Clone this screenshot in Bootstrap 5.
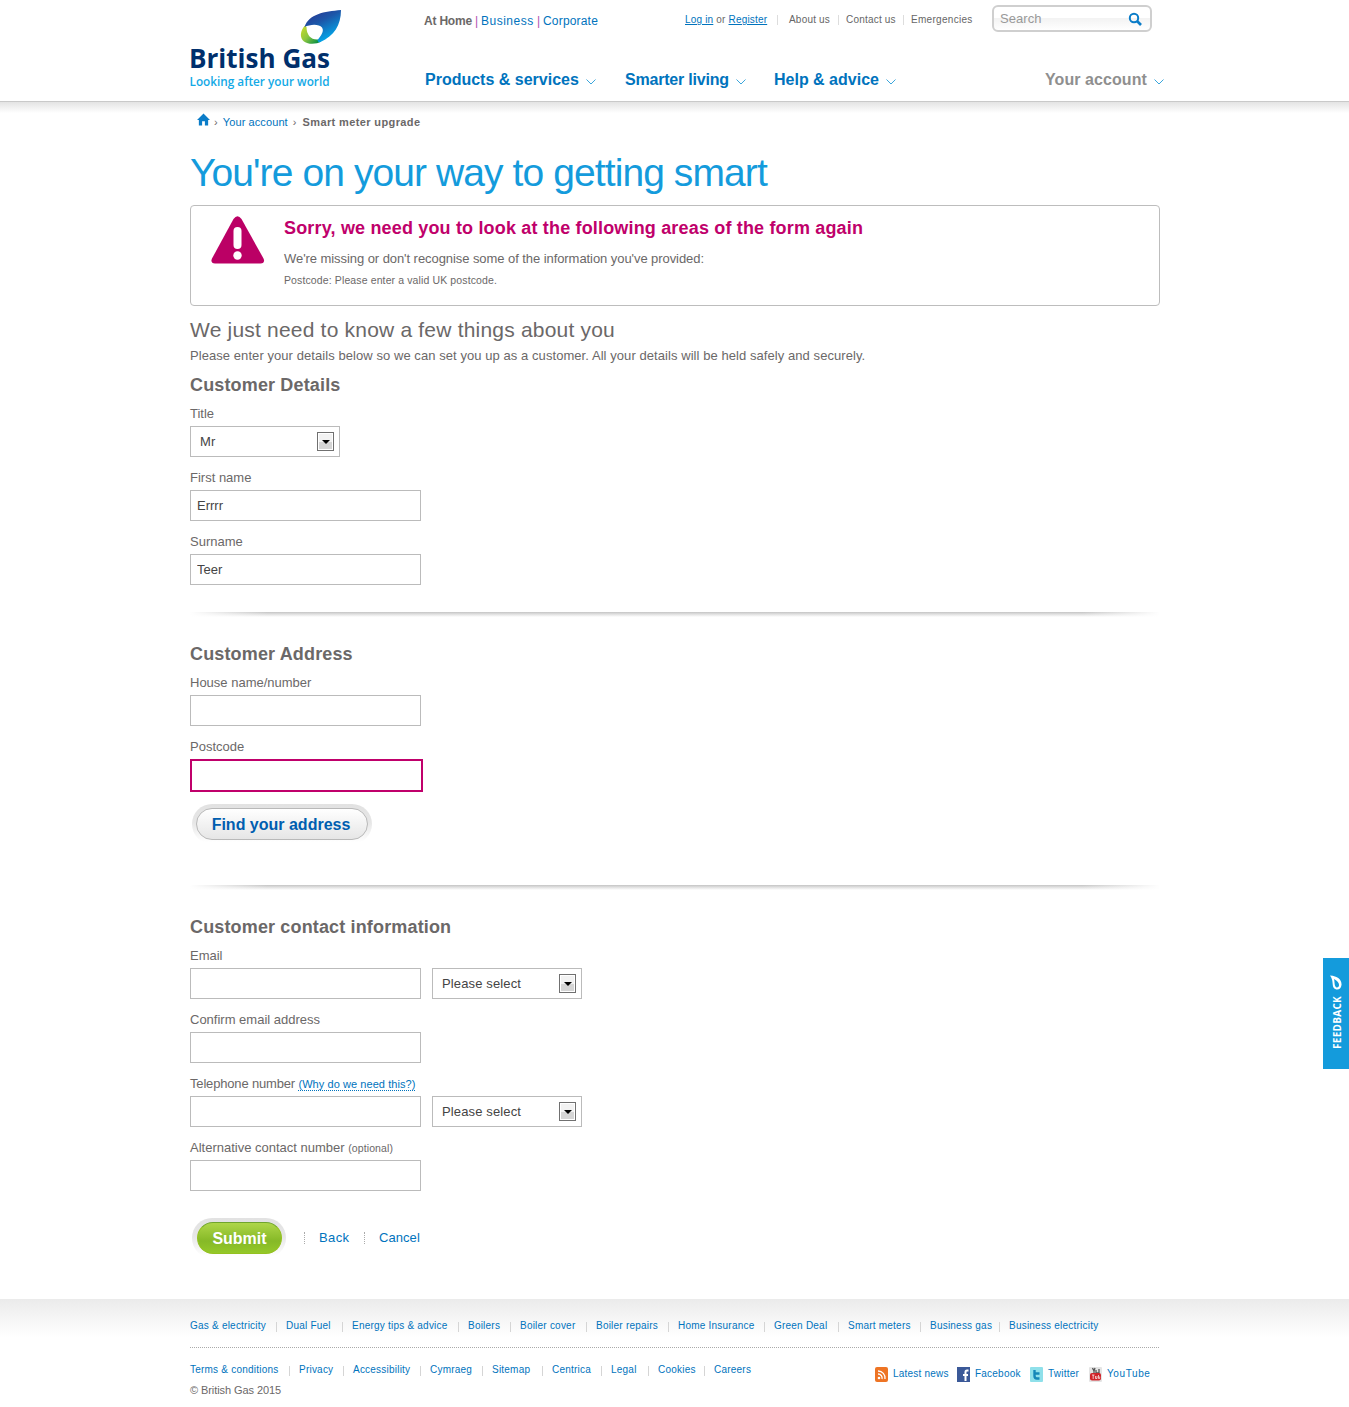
<!DOCTYPE html>
<html lang="en">
<head>
<meta charset="utf-8">
<meta name="viewport" content="width=device-width, initial-scale=1">
<title>Smart meter upgrade - British Gas</title>
<link href="https://cdn.jsdelivr.net/npm/bootstrap@5.3.0/dist/css/bootstrap.min.css" rel="stylesheet">
<style>
body{font-family:"Liberation Sans",Arial,sans-serif;font-size:13px;line-height:20px;color:#6b6868;letter-spacing:.06px;overflow-x:hidden}
a{color:#0073bd;text-decoration:none}
.wrap{width:970px;margin-left:190px}
.site-header{height:101px}
.logo{width:234px;height:101px;margin-left:-3px;margin-right:3px}
.header-main{width:740px}
.top-row{height:38px;padding-top:5px}
.audience{font-size:12px;width:261px;line-height:32px}
.audience a,.audience b{display:inline-block}
.audience b{letter-spacing:-.2px;width:48px}
.audience .biz{letter-spacing:.5px;width:53px}
.audience .corp{letter-spacing:.18px}
.audience i{font-style:normal;color:#b04fb0;display:inline-block;width:9px;text-align:center;letter-spacing:0}
.util{font-size:10px;letter-spacing:.2px;height:30px;width:307px}
.util u{color:#0073bd}
.util a{color:#666}
.util .in{letter-spacing:.18px;width:92px}
.util i{width:1px;height:10px;background:#ddd}
.u1{width:49px}.u2{width:57px}.u3{letter-spacing:.3px}
.search{width:160px;height:27px;border:2px solid #cfcfcf;border-radius:6px;color:#999;padding:0 8px 0 6px;background:linear-gradient(#fff 50%,#f3f3f3 50%,#fff)}
.main-nav{font-size:16px;font-weight:700;letter-spacing:0;padding:30px 0 0 1px;line-height:24px}
.main-nav a{display:flex;align-items:center}
.main-nav svg{margin:4px 0 0 7px}
.n1{width:200px}.n2{width:149px;letter-spacing:-.2px}.n3{width:271px}.n4{color:#8f8f8f!important;letter-spacing:.07px}
.head-shadow{height:12px;border-top:1px solid #c9c9c9;background:linear-gradient(#e3e3e3,#fff)}
.crumbs{font-size:11px;height:18px;letter-spacing:.1px;padding-left:7px;line-height:18px}
.crumbs a{margin:0 5px}
.crumbs b{letter-spacing:.38px;margin-left:6px}
h1{font-size:39px;line-height:48px;letter-spacing:-.91px;color:#149bdc;font-weight:400;margin:18px 0 8px}
.notice{height:101px;border:1px solid #bdbdbd;border-radius:4px;padding:10px 20px}
.notice svg{margin-right:19px}
.notice h2{font-size:18px;line-height:24px;font-weight:700;color:#c0006b;letter-spacing:.17px;margin:0 0 9px}
.notice p{letter-spacing:-.067px;margin:0;line-height:20px}
.notice p.detail{font-size:10.5px;letter-spacing:.12px;line-height:22px}
.intro{font-size:21px;line-height:28px;letter-spacing:.2px;font-weight:400;margin:10px 0 2px}
.lede{margin:0 0 7px;letter-spacing:.066px}
h3{font-size:18px;line-height:24px;font-weight:700;letter-spacing:.15px;margin:0 0 6px}
.field{height:64px}
.field label{display:block;height:20px;line-height:22px;margin-bottom:3px;letter-spacing:0}
.form-control{border:1px solid #bbb;border-radius:0;font-size:13px;height:31px;width:231px;padding:0 6px;color:#444;letter-spacing:0;line-height:29px;background:#fff}
.picker{width:150px;height:31px;border:1px solid #bbb;padding:0 5px 0 9px;color:#444;letter-spacing:.13px}
.picker+.picker,.form-control+.picker{margin-left:11px}
.arrow{width:17px;height:19px;border:1px solid #707070;box-shadow:inset 0 0 0 1px #fff;background:linear-gradient(#f2f2f2 50%,#d5d5d5 50%)}
.arrow::after{content:"";border:4px solid transparent;border-top-color:#000;border-bottom:0}
.form-control.bad{border:2px solid #c0006b;width:233px;height:33px}
.small-note{font-size:11px;letter-spacing:.066px}
.optional{font-size:10.5px;letter-spacing:.1px}
.tel{letter-spacing:-.17px!important}
.dotted{border-bottom:1px dotted #0073bd;line-height:12px;display:inline-block}
.divide{height:5px;background:linear-gradient(90deg,#fff,transparent 8%,transparent 92%,#fff),linear-gradient(#c4c4c4,#dedede 40%,#fff);margin-bottom:25px}
.gap-above{margin-top:17px}
.halo{border-radius:22px;background:linear-gradient(#e2e2e2,#e6e6e6 45%,#fff 95%);padding:4px;margin-left:2px;display:inline-flex}
.halo .btn{height:32px;border-radius:16px;padding:1px 0 0;font-size:16px;font-weight:700;line-height:30px;letter-spacing:0}
.find-row{padding:4px 0 41px}
.halo .find{width:172px;color:#005eb0;border:1px solid #b9b9b9;background:linear-gradient(#fff,#e6e6e6);padding-right:2px}
.halo.wide{padding-left:5px}
.send{width:85px;color:#fff;border:1px solid #94c120;border-top-color:#6fa52c;background:linear-gradient(#aed648,#86b927 60%,#94c829)}
.actions{height:81px;margin-top:17px;padding-bottom:41px}
.act{border-left:1px dotted #aaa;height:12px;line-height:12px;padding-left:14px}
.act.back{margin-left:18px;width:60px;letter-spacing:.4px}
.site-footer{height:108px;background:linear-gradient(#ebebeb,#fff 38px);font-size:10px;letter-spacing:.22px;padding-top:17px}
.flinks span{white-space:nowrap}
.flinks span:not(:last-child)::after{content:"";float:right;width:1px;height:10px;background:#d5d5d5;margin:6px 9px 0 0}
.f1{height:32px;border-bottom:1px dotted #aaa;width:969px}
.f1 :nth-child(1){width:96px}.f1 :nth-child(2){width:66px}.f1 :nth-child(3){width:116px}.f1 :nth-child(4){width:52px}.f1 :nth-child(5){width:76px}.f1 :nth-child(6){width:82px}.f1 :nth-child(7){width:96px}.f1 :nth-child(8){width:74px}.f1 :nth-child(9){width:82px}.f1 :nth-child(10){width:79px}
.f2 :nth-child(1){width:109px}.f2 :nth-child(2){width:54px}.f2 :nth-child(3){width:77px}.f2 :nth-child(4){width:62px}.f2 :nth-child(5){width:60px}.f2 :nth-child(6){width:59px}.f2 :nth-child(7){width:47px}.f2 :nth-child(8){width:56px}
.copy{font-size:11px;letter-spacing:-.08px}
.social{width:285px}
.social a{display:flex;align-items:center}
.social svg{margin-right:5px}
.s1{width:82px}.s2{width:73px}.s3{width:59px}.s4{letter-spacing:.6px}
.feedback{position:fixed;right:0;top:958px;width:26px;height:111px;background:#149bdc;color:#fff;font:700 10px/26px "Open Sans",sans-serif;letter-spacing:.28px;padding-left:2px}
.feedback:hover{color:#fff}
.feedback svg{margin:17px 2px 6px 0}
.feedback span{writing-mode:vertical-rl;transform:rotate(180deg);line-height:12px}
</style>
<script src="https://cdn.jsdelivr.net/npm/bootstrap@5.3.0/dist/js/bootstrap.bundle.min.js"></script>
</head>
<body>
<header class="site-header">
 <div class="wrap d-flex">
  <a href="#" class="logo d-block flex-shrink-0">
   <svg width="170" height="101" viewBox="187 0 170 101" aria-label="British Gas">
    <defs>
     <linearGradient id="lb" x1="0" y1="0" x2=".6" y2="1"><stop offset="0" stop-color="#2b2e8c"/><stop offset=".45" stop-color="#1c56a8"/><stop offset="1" stop-color="#00aeef"/></linearGradient>
     <linearGradient id="lg" x1="0" y1="0" x2="1" y2=".8"><stop offset="0" stop-color="#cddc29"/><stop offset=".5" stop-color="#8cc63f"/><stop offset="1" stop-color="#008c45"/></linearGradient>
    </defs>
    <path d="M305 25.500C300 31 299.500 38 304 41.500C309 45 317 44 321 41.500L318 39.500C311 40 306.500 35 306.500 27Z" fill="url(#lg)"/>
    <path d="M341 10C324 11.500 309 14 304.500 27C310 24 319 23.500 322 27.500C324.500 31 321 36 317.500 40C318 42 319 42.500 320.500 42C334 36 341 25 341 10Z" fill="url(#lb)"/>
    <text x="189" y="68" font-family="Open Sans" font-weight="700" font-size="27" fill="#002f6c" textLength="141" lengthAdjust="spacingAndGlyphs" letter-spacing="0">British Gas</text>
    <text x="189.500" y="86" font-family="Open Sans" font-weight="600" font-size="13" fill="#12a9e6" textLength="140" lengthAdjust="spacingAndGlyphs" letter-spacing="0">Looking after your world</text>
   </svg>
  </a>
  <div class="header-main flex-shrink-0">
   <div class="top-row d-flex">
    <div class="audience text-nowrap"><b>At Home</b><i>|</i><a href="#" class="biz">Business</a><i>|</i><a href="#" class="corp">Corporate</a></div>
    <div class="util d-flex align-items-center text-nowrap"><span class="in"><u>Log in</u> or <u>Register</u></span><i></i><a href="#" class="u1" style="margin-left:11px">About us</a><i></i><a href="#" class="u2" style="margin-left:7px">Contact us</a><i></i><a href="#" class="u3" style="margin-left:7px">Emergencies</a></div>
    <div class="search d-flex align-items-center justify-content-between"><span>Search</span>
     <svg width="14" height="14" viewBox="0 0 14 14" fill="none" stroke="#0a7cc8" stroke-width="2"><circle cx="6" cy="6" r="4.200"/><path d="M9 9l4 4" stroke-width="2.600"/></svg></div>
   </div>
   <nav class="main-nav d-flex text-nowrap">
    <a href="#" class="n1">Products &amp; services<svg width="10" height="6" fill="none" stroke="#3aa6dc"><path d="M.5 .5l4.500 4.500L9.500 .5"/></svg></a>
    <a href="#" class="n2">Smarter living<svg width="10" height="6" fill="none" stroke="#3aa6dc"><path d="M.5 .5l4.500 4.500L9.500 .5"/></svg></a>
    <a href="#" class="n3">Help &amp; advice<svg width="10" height="6" fill="none" stroke="#3aa6dc"><path d="M.5 .5l4.500 4.500L9.500 .5"/></svg></a>
    <a href="#" class="n4">Your account<svg width="10" height="6" fill="none" stroke="#3aa6dc"><path d="M.5 .5l4.500 4.500L9.500 .5"/></svg></a>
   </nav>
  </div>
 </div>
</header>
<div class="head-shadow"></div>
<main class="wrap">
 <div class="crumbs d-flex text-nowrap">
  <svg width="13" height="13" viewBox="0 0 14 13" fill="#0a7cc8" class="me-1"><path d="M7 0l7 7h-2v6H8.500V8.500h-3V13H2V7H0z"/></svg>
  <span>›</span><a href="#">Your account</a><span>›</span><b>Smart meter upgrade</b>
 </div>
 <h1>You're on your way to getting smart</h1>
 <section class="notice d-flex align-items-start">
  <svg width="54" height="48" viewBox="0 0 54 48"><path d="M22.500 3Q26.500-2.500 30.500 3L52.500 42.500Q54.500 47 49.500 47.500H4Q-1 47 1 42.500Z" fill="#bb0065"/><rect x="22.500" y="11" width="8" height="22" rx="4" fill="#fff"/><circle cx="26.500" cy="39.500" r="4.200" fill="#fff"/></svg>
  <div><h2>Sorry, we need you to look at the following areas of the form again</h2>
   <p>We're missing or don't recognise some of the information you've provided:</p>
   <p class="detail">Postcode: Please enter a valid UK postcode.</p></div>
 </section>
 <h2 class="intro">We just need to know a few things about you</h2>
 <p class="lede">Please enter your details below so we can set you up as a customer. All your details will be held safely and securely.</p>
 <h3>Customer Details</h3>
 <div class="field"><label>Title</label><div class="picker d-flex align-items-center justify-content-between">Mr<span class="arrow d-flex align-items-center justify-content-center"></span></div></div>
 <div class="field"><label for="fn">First name</label><input id="fn" class="form-control" value="Errrr"></div>
 <div class="field"><label for="sn">Surname</label><input id="sn" class="form-control" value="Teer"></div>
 <div class="divide gap-above"></div>
 <h3>Customer Address</h3>
 <div class="field"><label for="hn">House name/number</label><input id="hn" class="form-control"></div>
 <div class="field"><label for="pc">Postcode</label><input id="pc" class="form-control bad"></div>
 <div class="find-row d-flex"><span class="halo"><button class="btn find">Find your address</button></span></div>
 <div class="divide"></div>
 <h3>Customer contact information</h3>
 <div class="field"><label for="em">Email</label><div class="d-flex"><input id="em" class="form-control"><div class="picker d-flex align-items-center justify-content-between">Please select<span class="arrow d-flex align-items-center justify-content-center"></span></div></div></div>
 <div class="field"><label for="ce">Confirm email address</label><input id="ce" class="form-control"></div>
 <div class="field"><label for="tel" class="tel">Telephone number <a href="#" class="small-note dotted">(Why do we need this?)</a></label><div class="d-flex"><input id="tel" class="form-control"><div class="picker d-flex align-items-center justify-content-between">Please select<span class="arrow d-flex align-items-center justify-content-center"></span></div></div></div>
 <div class="field"><label for="alt">Alternative contact number <span class="optional">(optional)</span></label><input id="alt" class="form-control"></div>
 <div class="actions d-flex align-items-center"><span class="halo wide"><button class="btn send">Submit</button></span><a href="#" class="act back">Back</a><a href="#" class="act">Cancel</a></div>
</main>
<footer class="site-footer">
 <div class="wrap">
  <div class="flinks f1 d-flex"><span><a href="#">Gas &amp; electricity</a></span><span><a href="#">Dual Fuel</a></span><span><a href="#">Energy tips &amp; advice</a></span><span><a href="#">Boilers</a></span><span><a href="#">Boiler cover</a></span><span><a href="#">Boiler repairs</a></span><span><a href="#">Home Insurance</a></span><span><a href="#">Green Deal</a></span><span><a href="#">Smart meters</a></span><span><a href="#">Business gas</a></span><span><a href="#">Business electricity</a></span></div>
  <div class="d-flex justify-content-between pt-2">
   <div class="pt-1"><div class="flinks f2 d-flex"><span><a href="#">Terms &amp; conditions</a></span><span><a href="#">Privacy</a></span><span><a href="#">Accessibility</a></span><span><a href="#">Cymraeg</a></span><span><a href="#">Sitemap</a></span><span><a href="#">Centrica</a></span><span><a href="#">Legal</a></span><span><a href="#">Cookies</a></span><span><a href="#">Careers</a></span></div>
   <div class="copy">© British Gas 2015</div></div>
   <div class="social d-flex align-items-start pt-2 text-nowrap">
    <a href="#" class="s1"><svg width="13" height="15" viewBox="0 0 13 15"><rect width="13" height="15" rx="2" fill="#ee7424"/><g fill="none" stroke="#fff" stroke-width="1.300"><path d="M3 7a4 4 0 0 1 4 5M3 4a7 7 0 0 1 7 8"/></g><circle cx="4" cy="11" r="1.300" fill="#fff"/></svg>Latest news</a>
    <a href="#" class="s2"><svg width="13" height="15" viewBox="0 0 13 15"><rect width="13" height="15" fill="#3b5998"/><path d="M11.500 3.500H10Q8.500 3.500 8.500 5V14M6 8h5" fill="none" stroke="#fff" stroke-width="2"/></svg>Facebook</a>
    <a href="#" class="s3"><svg width="13" height="15" viewBox="0 0 13 15"><rect width="13" height="15" rx="1" fill="#8fe0ea"/><path d="M4.500 3v6q0 2.500 2.500 2.500h2.500M4.500 6.500h5" fill="none" stroke="#1487b8" stroke-width="2.400"/></svg>Twitter</a>
    <a href="#" class="s4"><svg width="13" height="15" viewBox="0 0 13 15"><rect width="13" height="15" rx="1" fill="#e4e4e4"/><path d="M3.500 1l1.500 3v2M6 1L5 4M7 3v3h3V2" stroke="#555" fill="none" stroke-width="1.300"/><rect x="1" y="6" width="11" height="7.500" rx="2" fill="#d0232a"/><path d="M3 8h2.500M4.200 8v4M6.500 9v2.500h1.500V9M9.500 8v3.500h1.200V9.500" stroke="#fff" fill="none" stroke-width=".7"/></svg>YouTube</a>
   </div>
  </div>
 </div>
</footer>
<a href="#" class="feedback d-flex flex-column align-items-center"><svg width="12" height="15" viewBox="0 0 12 15"><path d="M0 .5C8 1 12 5 11.500 10C11 15 6 16 3.500 12.500C2 10 3.500 5 0 .5ZM4 4C5 8 4 10.500 6.500 12.500C10 13 10.500 7 4 4Z" fill="#fff" fill-rule="evenodd"/></svg><span>FEEDBACK</span></a>
</body>
</html>
